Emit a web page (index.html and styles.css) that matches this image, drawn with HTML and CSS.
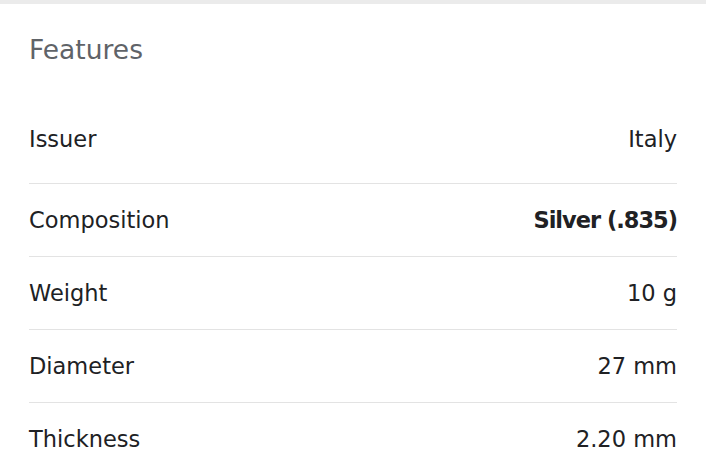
FILE: index.html
```html
<!DOCTYPE html>
<html>
<head>
<meta charset="utf-8">
<link rel="stylesheet" href="styles.css">
</head>
<body>
<div class="topband"></div>
<section class="card">
  <h2 class="title">Features</h2>
  <ul class="list">
    <li class="row first"><span class="label">Issuer</span><span class="value">Italy</span></li>
    <li class="row"><span class="label">Composition</span><span class="value strong">Silver (.835)</span></li>
    <li class="row"><span class="label">Weight</span><span class="value">10 g</span></li>
    <li class="row"><span class="label">Diameter</span><span class="value">27 mm</span></li>
    <li class="row"><span class="label">Thickness</span><span class="value">2.20 mm</span></li>
  </ul>
</section>
</body>
</html>
```
FILE: styles.css
```css
html, body {
  margin: 0;
  padding: 0;
  background: #ffffff;
  font-family: "DejaVu Sans", "Open Sans", sans-serif;
  color: #202124;
}
.topband {
  height: 4px;
  background: #ebebeb;
}
.card {
  padding: 0 29px;
}
.title {
  margin: 0;
  padding-top: 29px;
  height: 77px;
  box-sizing: border-box;
  font-size: 26.5px;
  line-height: 34px;
  font-weight: 400;
  color: #5f6368;
}
.list {
  list-style: none;
  margin: 0;
  padding: 0;
}
.row {
  display: flex;
  justify-content: space-between;
  align-items: center;
  height: 72px;
  border-top: 1px solid #e3e3e3;
  font-size: 22.5px;
}
.row.first {
  border-top: none;
  height: 102px;
  padding-top: 14px;
  box-sizing: border-box;
}
.value.strong {
  font-weight: 700;
  letter-spacing: -1px;
}
```
